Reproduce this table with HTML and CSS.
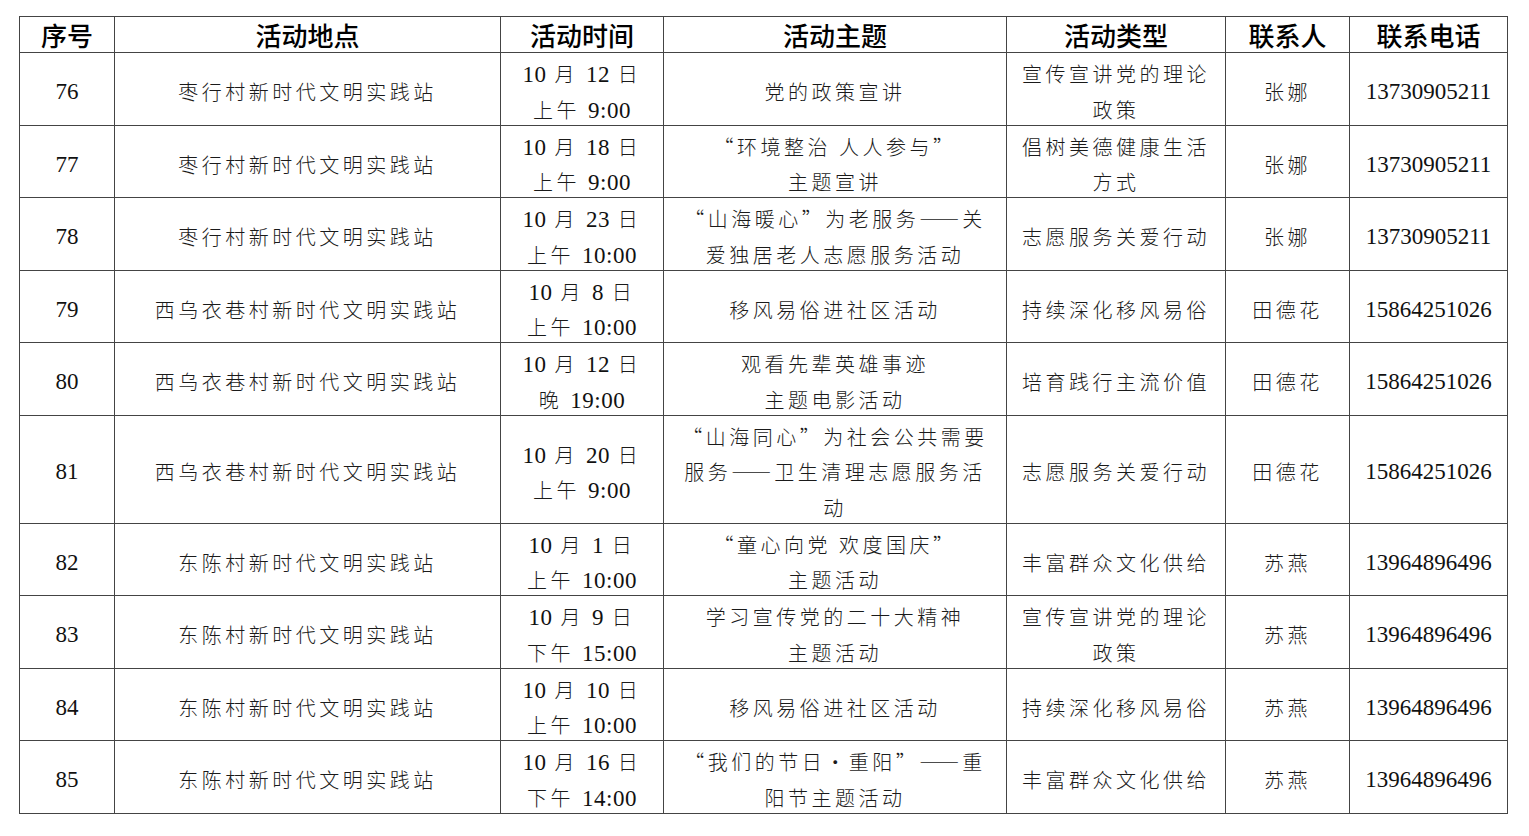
FILE: index.html
```html
<!DOCTYPE html>
<html lang="zh-CN">
<head>
<meta charset="utf-8">
<title>活动安排</title>
<link rel="stylesheet" href="styles.css">
</head>
<body>
<table class="sheet">
  <colgroup>
    <col class="c-no"><col class="c-place"><col class="c-time"><col class="c-topic"><col class="c-type"><col class="c-person"><col class="c-phone">
  </colgroup>
  <thead>
    <tr class="head">
      <th>序号</th><th>活动地点</th><th>活动时间</th><th>活动主题</th><th>活动类型</th><th>联系人</th><th>联系电话</th>
    </tr>
  </thead>
  <tbody>
    <tr>
      <td class="num"><div class="in">76</div></td><td><div class="in">枣行村新时代文明实践站</div></td>
      <td><div class="in"><span class="d">10</span> 月 <span class="d">12</span> 日<br>上午 <span class="d">9:00</span></div></td>
      <td><div class="in">党的政策宣讲</div></td><td><div class="in">宣传宣讲党的理论<br>政策</div></td><td><div class="in">张娜</div></td><td class="num"><div class="in">13730905211</div></td>
    </tr>
    <tr>
      <td class="num"><div class="in">77</div></td><td><div class="in">枣行村新时代文明实践站</div></td>
      <td><div class="in"><span class="d">10</span> 月 <span class="d">18</span> 日<br>上午 <span class="d">9:00</span></div></td>
      <td><div class="in">“环境整治 人人参与”<br>主题宣讲</div></td><td><div class="in">倡树美德健康生活<br>方式</div></td><td><div class="in">张娜</div></td><td class="num"><div class="in">13730905211</div></td>
    </tr>
    <tr>
      <td class="num"><div class="in">78</div></td><td><div class="in">枣行村新时代文明实践站</div></td>
      <td><div class="in"><span class="d">10</span> 月 <span class="d">23</span> 日<br>上午 <span class="d">10:00</span></div></td>
      <td><div class="in">“山海暖心”为老服务<span class="dash">——</span>关<br>爱独居老人志愿服务活动</div></td><td><div class="in">志愿服务关爱行动</div></td><td><div class="in">张娜</div></td><td class="num"><div class="in">13730905211</div></td>
    </tr>
    <tr>
      <td class="num"><div class="in">79</div></td><td><div class="in">西乌衣巷村新时代文明实践站</div></td>
      <td><div class="in"><span class="d">10</span> 月 <span class="d">8</span> 日<br>上午 <span class="d">10:00</span></div></td>
      <td><div class="in">移风易俗进社区活动</div></td><td><div class="in">持续深化移风易俗</div></td><td><div class="in">田德花</div></td><td class="num"><div class="in">15864251026</div></td>
    </tr>
    <tr>
      <td class="num"><div class="in">80</div></td><td><div class="in">西乌衣巷村新时代文明实践站</div></td>
      <td><div class="in"><span class="d">10</span> 月 <span class="d">12</span> 日<br>晚 <span class="d">19:00</span></div></td>
      <td><div class="in">观看先辈英雄事迹<br>主题电影活动</div></td><td><div class="in">培育践行主流价值</div></td><td><div class="in">田德花</div></td><td class="num"><div class="in">15864251026</div></td>
    </tr>
    <tr class="tall">
      <td class="num"><div class="in">81</div></td><td><div class="in">西乌衣巷村新时代文明实践站</div></td>
      <td><div class="in"><span class="d">10</span> 月 <span class="d">20</span> 日<br>上午 <span class="d">9:00</span></div></td>
      <td><div class="in">“山海同心”为社会公共需要<br>服务<span class="dash">——</span>卫生清理志愿服务活<br>动</div></td><td><div class="in">志愿服务关爱行动</div></td><td><div class="in">田德花</div></td><td class="num"><div class="in">15864251026</div></td>
    </tr>
    <tr>
      <td class="num"><div class="in">82</div></td><td><div class="in">东陈村新时代文明实践站</div></td>
      <td><div class="in"><span class="d">10</span> 月 <span class="d">1</span> 日<br>上午 <span class="d">10:00</span></div></td>
      <td><div class="in">“童心向党 欢度国庆”<br>主题活动</div></td><td><div class="in">丰富群众文化供给</div></td><td><div class="in">苏燕</div></td><td class="num"><div class="in">13964896496</div></td>
    </tr>
    <tr>
      <td class="num"><div class="in">83</div></td><td><div class="in">东陈村新时代文明实践站</div></td>
      <td><div class="in"><span class="d">10</span> 月 <span class="d">9</span> 日<br>下午 <span class="d">15:00</span></div></td>
      <td><div class="in">学习宣传党的二十大精神<br>主题活动</div></td><td><div class="in">宣传宣讲党的理论<br>政策</div></td><td><div class="in">苏燕</div></td><td class="num"><div class="in">13964896496</div></td>
    </tr>
    <tr>
      <td class="num"><div class="in">84</div></td><td><div class="in">东陈村新时代文明实践站</div></td>
      <td><div class="in"><span class="d">10</span> 月 <span class="d">10</span> 日<br>上午 <span class="d">10:00</span></div></td>
      <td><div class="in">移风易俗进社区活动</div></td><td><div class="in">持续深化移风易俗</div></td><td><div class="in">苏燕</div></td><td class="num"><div class="in">13964896496</div></td>
    </tr>
    <tr>
      <td class="num"><div class="in">85</div></td><td><div class="in">东陈村新时代文明实践站</div></td>
      <td><div class="in"><span class="d">10</span> 月 <span class="d">16</span> 日<br>下午 <span class="d">14:00</span></div></td>
      <td><div class="in">“我们的节日•重阳”<span class="dash">——</span>重<br>阳节主题活动</div></td><td><div class="in">丰富群众文化供给</div></td><td><div class="in">苏燕</div></td><td class="num"><div class="in">13964896496</div></td>
    </tr>
  </tbody>
</table>
</body>
</html>
```

FILE: styles.css
```css
html, body {
  margin: 0;
  padding: 0;
  background: #ffffff;
}

body {
  padding: 16px 0 0 19px;
  font-family: "Noto Sans CJK SC", sans-serif;
  color: #1a1a1a;
}

.sheet {
  border-collapse: collapse;
  table-layout: fixed;
  width: 1488px;
}

.c-no { width: 95px; }
.c-place { width: 386px; }
.c-time { width: 163px; }
.c-topic { width: 343px; }
.c-type { width: 219px; }
.c-person { width: 124px; }
.c-phone { width: 158px; }

.sheet th,
.sheet td {
  border: 1px solid #444444;
  padding: 0;
  text-align: center;
  vertical-align: middle;
  white-space: nowrap;
  overflow: hidden;
}

.head th {
  height: 35px;
  font-size: 26px;
  font-weight: 500;
  line-height: 35px;
  color: #000000;
}

.sheet td {
  height: 71.56px;
  font-size: 20px;
  font-weight: 300;
  line-height: 35.6px;
  letter-spacing: 3.5px;
}

.sheet td .in {
  margin: 3px 0 -3px;
}

.sheet tr.tall td {
  height: 106.8px;
}

.sheet td.num,
.sheet td .d {
  font-family: "Liberation Serif", "Times New Roman", serif;
  font-size: 23px;
  font-weight: 400;
  letter-spacing: 0;
  color: #111111;
}

.sheet td .d {
  line-height: 20px;
  letter-spacing: 0.5px;
}

.sheet td .dash {
  letter-spacing: -1px;
  margin-right: 4px;
}
```
